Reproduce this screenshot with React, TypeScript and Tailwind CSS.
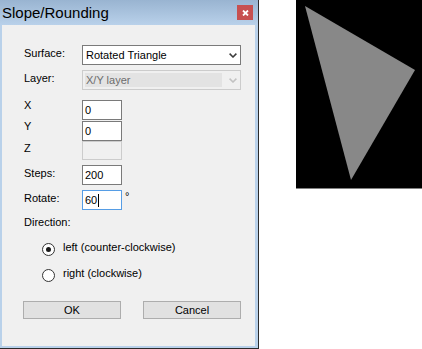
import React from "react";

const Chevron = ({ color }: { color: string }) => (
  <svg width="8" height="5" viewBox="0 0 8 5" className="shrink-0">
    <path d="M0.6 0.6 L4 4 L7.4 0.6" fill="none" stroke={color} strokeWidth="1.5" />
  </svg>
);

const Radio = ({ checked }: { checked?: boolean }) => (
  <span className="w-[13px] h-[13px] shrink-0 rounded-full border border-[#333333] bg-white flex items-center justify-center">
    {checked && <span className="w-[5px] h-[5px] rounded-full bg-[#1a1a1a]" />}
  </span>
);

function Row({
  label,
  labelClass = "mt-[2px]",
  className = "",
  children,
}: {
  label: string;
  labelClass?: string;
  className?: string;
  children: React.ReactNode;
}) {
  return (
    <div className={`flex items-start ${className}`}>
      <span className={`w-[58px] shrink-0 leading-[12px] ${labelClass}`}>{label}</span>
      {children}
    </div>
  );
}

function TextBox({ value, focused, disabled, h = "h-[20px]" }: { value?: string; focused?: boolean; disabled?: boolean; h?: string }) {
  return (
    <div
      className={`w-[40px] ${h} border pl-[2px] leading-[18px] flex items-center ${
        disabled
          ? "border-[#cccccc] bg-[#f0f0f0]"
          : focused
          ? "border-[#569de5] bg-white"
          : "border-[#7a7a7a] bg-white"
      }`}
    >
      <span>{value}</span>
      {focused && <span className="w-[1px] h-[13px] bg-black ml-[1px]" />}
    </div>
  );
}

export default function App() {
  return (
    <div className="w-[422px] h-[349px] bg-white flex items-start font-['Liberation_Sans',Arial,sans-serif] text-[11px] text-black">
      <div className="w-[259px] h-[349px] flex flex-col border-r border-b border-[#2b2b2b]">
        <div className="h-[25px] shrink-0 flex items-start bg-linear-to-b from-[#99b4d1] to-[#b9d1ea]">
          <span className="ml-[2px] pt-[1px] text-[15px] leading-[24px]">Slope/Rounding</span>
          <button className="ml-auto mr-[5px] mt-[5px] w-[16px] h-[15px] bg-[#c75050] flex items-center justify-center">
            <svg width="7" height="6" viewBox="0 0 7 6">
              <path d="M1 0.5 L6 5.5 M6 0.5 L1 5.5" stroke="white" strokeWidth="1.8" />
            </svg>
          </button>
        </div>

        <div className="flex-1 flex pl-[2px] pr-[3px] pb-[2px] bg-[#b9d1ea]">
          <div className="flex-1 bg-[#f0f0f0] flex flex-col pl-[22px] pt-[20px]">
            <Row label="Surface:">
              <div className="w-[159px] h-[20px] border border-[#7a7a7a] bg-white flex items-center pl-[3px] pr-[3px] leading-[18px]">
                <span>Rotated Triangle</span>
                <span className="ml-auto">
                  <Chevron color="#3c3c3c" />
                </span>
              </div>
            </Row>

            <Row label="Layer:" className="mt-[5px]">
              <div className="w-[159px] h-[20px] border border-[#cccccc] bg-[#f0f0f0] flex items-center pr-[3px]">
                <span className="w-[137px] h-[14px] ml-[2px] bg-[#e3e3e3] leading-[14px] pl-[1px] text-[#6d6d6d]">X/Y layer</span>
                <span className="ml-auto">
                  <Chevron color="#c2c2c2" />
                </span>
              </div>
            </Row>

            <Row label="X" labelClass="-mt-[1px]" className="mt-[10px]">
              <TextBox value="0" />
            </Row>
            <Row label="Y" labelClass="-mt-[1px]" className="mt-[1px]">
              <TextBox value="0" />
            </Row>
            <Row label="Z" labelClass="mt-[1px]">
              <TextBox disabled h="h-[19px]" />
            </Row>

            <Row label="Steps:" className="mt-[5px]">
              <TextBox value="200" />
            </Row>
            <Row label="Rotate:" className="mt-[5px]">
              <TextBox value="60" focused />
              <span className="ml-[3px] leading-[12px]">°</span>
            </Row>

            <span className="mt-[6px] leading-[12px]">Direction:</span>

            <div className="mt-[15px] ml-[18px] flex items-start">
              <Radio checked />
              <span className="ml-[8px] -mt-[2px] leading-[12px]">left (counter-clockwise)</span>
            </div>
            <div className="mt-[13px] ml-[18px] flex items-start">
              <Radio />
              <span className="ml-[8px] -mt-[2px] leading-[12px]">right (clockwise)</span>
            </div>

            <div className="mt-[19px] -ml-[1px] flex gap-[22px]">
              <button className="w-[98px] h-[18px] border border-[#adadad] bg-[#e1e1e1] leading-[16px] text-center">OK</button>
              <button className="w-[98px] h-[18px] border border-[#adadad] bg-[#e1e1e1] leading-[16px] text-center">Cancel</button>
            </div>
          </div>
        </div>
      </div>

      <div className="ml-[37px] w-[126px] h-[189px] bg-black border-b border-[#808080]">
        <svg width="126" height="188" viewBox="0 0 126 188">
          <polygon points="9,6 119,70 55,180" fill="#888888" />
        </svg>
      </div>
    </div>
  );
}
